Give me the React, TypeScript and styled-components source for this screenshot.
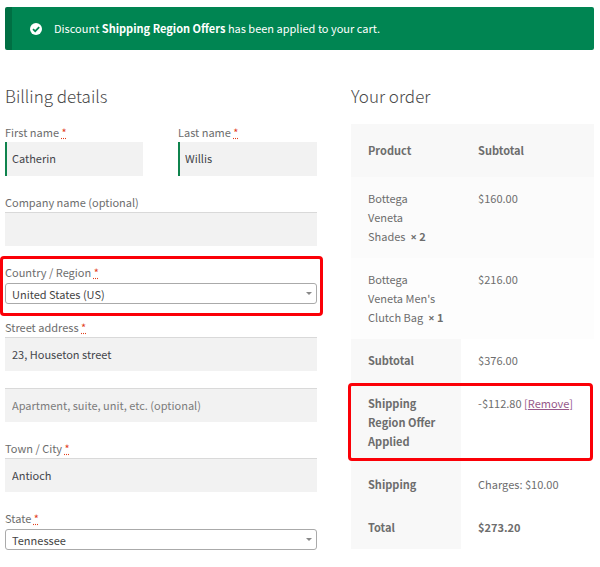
import React, { useId, useState } from "react";
import styled, { createGlobalStyle, css } from "styled-components";

const GlobalStyle = createGlobalStyle`
  *, *::before, *::after { box-sizing: border-box; }
  body {
    margin: 0;
    background: #fff;
    color: #6d6d6d;
    font-family: "Source Sans Pro", "Noto Sans CJK SC", "Open Sans", sans-serif;
    font-size: 11px;
    line-height: 19px;
  }
`;

const Page = styled.main`
  padding: 7px 6px 16px 5px;
`;

const Notice = styled.div`
  display: flex;
  align-items: center;
  gap: 12px;
  padding: 12px 24px 12px 18px;
  border-left: 7px solid #006f43;
  border-radius: 2px;
  background: #008552;
  color: #fff;
`;

const NoticeText = styled.p`
  margin: 0;
`;

const Strong = styled.strong`
  font-weight: 700;
`;

const Times = styled.span`
  font-family: "Open Sans", sans-serif;
`;

const Columns = styled.div`
  display: grid;
  grid-template-columns: minmax(0, 312fr) minmax(0, 243fr);
  column-gap: 34px;
  align-items: start;
  margin-top: 32px;
`;

const Title = styled.h3`
  margin: 0 0 13px;
  font-size: 17px;
  font-weight: 300;
  line-height: 28px;
  color: #484848;
`;

const BillingForm = styled.form`
  display: flex;
  flex-direction: column;
`;

const NameRow = styled.div`
  display: grid;
  grid-template-columns: 138fr 139fr;
  column-gap: 35px;
`;

const highlight = css`
  content: "";
  position: absolute;
  border: 3px solid #fb0007;
  border-radius: 4px;
  pointer-events: none;
`;

const FieldBox = styled.div<{ $compact?: boolean; $highlighted?: boolean }>`
  display: flex;
  flex-direction: column;
  margin-bottom: ${(p) => (p.$compact ? 14 : 17)}px;
  ${(p) =>
    p.$highlighted &&
    css`
      position: relative;
      &::after {
        ${highlight}
        inset: -7px -6px -12px -5px;
      }
    `}
`;

const Label = styled.label`
  display: block;
`;

const Required = styled.abbr`
  color: #e2401c;
  text-decoration: underline dotted;
`;

const TextInput = styled.input<{ $valid?: boolean }>`
  width: 100%;
  height: 34px;
  padding: ${(p) => (p.$valid ? "0 7px 2px" : "0 7px")};
  border: 0;
  border-radius: 0;
  background: #f2f2f2;
  box-shadow: ${(p) => (p.$valid ? "inset 2px 0 0 #0f834d" : "inset 0 1px 0 #d9d9d9")};
  color: #43454b;
  font: inherit;
  outline: none;
  &::placeholder { color: #7b7b7b; opacity: 1; }
`;

const SelectWrap = styled.div`
  display: grid;
  align-items: center;
  margin-top: 1px;
  & > * { grid-area: 1 / 1; }
`;

const Select = styled.select`
  appearance: none;
  width: 100%;
  height: 21px;
  padding: 0 20px 0 6px;
  border: 1px solid #aaa;
  border-radius: 3px;
  background: #fff;
  color: #444;
  font: inherit;
  line-height: 18px;
`;

const Caret = styled.svg`
  justify-self: end;
  margin-right: 5px;
  pointer-events: none;
`;

const OrderTable = styled.table`
  width: 100%;
  margin-top: 14px;
  table-layout: fixed;
  border-collapse: collapse;
  text-align: left;
`;

const ProductCol = styled.col`
  width: 45.3%;
`;

const HeadCell = styled.th`
  padding: 17px;
  background: #f8f8f8;
  font-weight: 700;
`;

const ItemCell = styled.td<{ $alt?: boolean }>`
  padding: 12px 17px;
  background: ${(p) => (p.$alt ? "#fdfdfd" : "#fbfbfb")};
  vertical-align: top;
`;

const TotalRow = styled.tr<{ $highlighted?: boolean }>`
  ${(p) =>
    p.$highlighted &&
    css`
      position: relative;
      & > td::after {
        ${highlight}
        inset: 1px 1px 2px -3px;
      }
    `}
`;

const TotalLabel = styled.th`
  padding: 12px 17px;
  background: #f8f8f8;
  font-weight: 700;
  vertical-align: top;
`;

const TotalValue = styled.td`
  padding: 12px 17px;
  vertical-align: top;
`;

const RemoveLink = styled.a`
  color: #96588a;
  text-decoration: underline;
`;

const CheckIcon = () => (
  <svg width="12" height="12" viewBox="0 0 12 12" aria-hidden="true">
    <circle cx="6" cy="6" r="6" fill="#fff" />
    <path d="M3 6.1 5.2 8.2 9.2 4.2" fill="none" stroke="#008552" strokeWidth="1.7" />
  </svg>
);

type FieldProps = {
  label?: string;
  required?: boolean;
  valid?: boolean;
  initial?: string;
  placeholder?: string;
};

const FieldLabel = ({ id, label, required }: { id: string; label: string; required?: boolean }) => (
  <Label htmlFor={id}>
    {label} {required && <Required title="required">*</Required>}
  </Label>
);

const TextField = ({ label, required, valid, initial = "", placeholder }: FieldProps) => {
  const id = useId();
  const [value, setValue] = useState(initial);
  return (
    <FieldBox>
      {label && <FieldLabel id={id} label={label} required={required} />}
      <TextInput
        id={id}
        type="text"
        aria-label={label ? undefined : placeholder}
        placeholder={placeholder}
        required={required}
        $valid={valid}
        value={value}
        onChange={(e) => setValue(e.target.value)}
      />
    </FieldBox>
  );
};

const SelectField = ({
  label,
  options,
  highlighted,
}: {
  label: string;
  options: string[];
  highlighted?: boolean;
}) => {
  const id = useId();
  return (
    <FieldBox $compact $highlighted={highlighted}>
      <FieldLabel id={id} label={label} required />
      <SelectWrap>
        <Select id={id} defaultValue={options[0]}>
          {options.map((o) => (
            <option key={o}>{o}</option>
          ))}
        </Select>
        <Caret width="6" height="3" viewBox="0 0 6 3" aria-hidden="true">
          <path d="M0 0h6L3 3z" fill="#888" />
        </Caret>
      </SelectWrap>
    </FieldBox>
  );
};

const items = [
  { name: "Bottega Veneta Shades", qty: 2, price: "$160.00" },
  { name: "Bottega Veneta Men's Clutch Bag", qty: 1, price: "$216.00" },
];

export default function App() {
  return (
    <>
      <GlobalStyle />
      <Page>
        <Notice role="alert">
          <CheckIcon />
          <NoticeText>
            Discount <Strong>Shipping Region Offers</Strong> has been applied to your cart.
          </NoticeText>
        </Notice>
        <Columns>
          <section>
            <Title>Billing details</Title>
            <BillingForm>
              <NameRow>
                <TextField label="First name" required valid initial="Catherin" />
                <TextField label="Last name" required valid initial="Willis" />
              </NameRow>
              <TextField label="Company name (optional)" />
              <SelectField label="Country / Region" options={["United States (US)"]} highlighted />
              <TextField label="Street address" required initial="23, Houseton street" />
              <TextField placeholder="Apartment, suite, unit, etc. (optional)" />
              <TextField label="Town / City" required initial="Antioch" />
              <SelectField label="State" options={["Tennessee"]} />
            </BillingForm>
          </section>
          <section>
            <Title>Your order</Title>
            <OrderTable>
              <colgroup>
                <ProductCol />
                <col />
              </colgroup>
              <thead>
                <tr>
                  <HeadCell scope="col">Product</HeadCell>
                  <HeadCell scope="col">Subtotal</HeadCell>
                </tr>
              </thead>
              <tbody>
                {items.map((item, i) => (
                  <tr key={item.name}>
                    <ItemCell $alt={i % 2 === 1}>
                      {item.name}&nbsp; <Strong><Times>×</Times>&nbsp;{item.qty}</Strong>
                    </ItemCell>
                    <ItemCell $alt={i % 2 === 1}>{item.price}</ItemCell>
                  </tr>
                ))}
              </tbody>
              <tfoot>
                <TotalRow>
                  <TotalLabel scope="row">Subtotal</TotalLabel>
                  <TotalValue>$376.00</TotalValue>
                </TotalRow>
                <TotalRow $highlighted>
                  <TotalLabel scope="row">Shipping Region Offer Applied</TotalLabel>
                  <TotalValue>
                    -$112.80 <RemoveLink href="#remove">[Remove]</RemoveLink>
                  </TotalValue>
                </TotalRow>
                <TotalRow>
                  <TotalLabel scope="row">Shipping</TotalLabel>
                  <TotalValue>Charges: $10.00</TotalValue>
                </TotalRow>
                <TotalRow>
                  <TotalLabel scope="row">Total</TotalLabel>
                  <TotalValue>
                    <Strong>$273.20</Strong>
                  </TotalValue>
                </TotalRow>
              </tfoot>
            </OrderTable>
          </section>
        </Columns>
      </Page>
    </>
  );
}
